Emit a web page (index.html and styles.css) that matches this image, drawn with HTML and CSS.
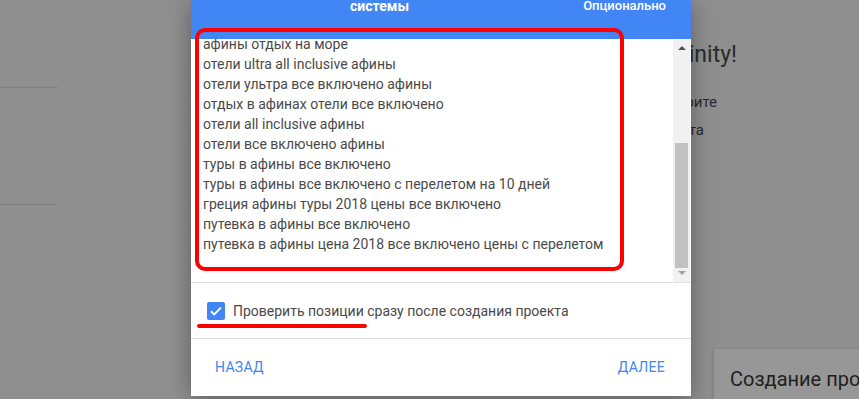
FILE: index.html
```html
<!DOCTYPE html>
<html lang="ru">
<head>
    <meta charset="UTF-8">
    <title>Создание проекта</title>
    <link rel="stylesheet" href="styles.css">
</head>
<body>
<div class="page">
    <div class="side">
        <div class="side-row"></div>
        <div class="side-row"></div>
    </div>
    <div class="intro">
        <p class="intro-title">Добро пожаловать в Serpinity!</p>
        <p class="intro-line l1">Чтобы начать работу, создайте проект и выберите</p>
        <p class="intro-line l2">регион и поисковую систему для вашего сайта</p>
    </div>
    <div class="card">Создание проекта</div>
</div>

<div class="dialog">
    <div class="dialog-head">
        <span class="head-title">системы</span>
        <span class="head-opt">Опционально</span>
    </div>
    <div class="keywords">
        <div class="keywords-list">
            <div>афины отдых на море</div>
            <div>отели ultra all inclusive афины</div>
            <div>отели ультра все включено афины</div>
            <div>отдых в афинах отели все включено</div>
            <div>отели all inclusive афины</div>
            <div>отели все включено афины</div>
            <div>туры в афины все включено</div>
            <div>туры в афины все включено с перелетом на 10 дней</div>
            <div>греция афины туры 2018 цены все включено</div>
            <div>путевка в афины все включено</div>
            <div>путевка в афины цена 2018 все включено цены с перелетом</div>
        </div>
        <div class="scrollbar">
            <span class="arrow up"></span>
            <span class="thumb"></span>
            <span class="arrow down"></span>
        </div>
        <div class="mark-box"></div>
    </div>
    <label class="check-row">
        <span class="checkbox">
            <svg width="18" height="18" viewBox="0 0 18 18"><path d="M4 9.2l3.2 3.2L14 5.6" fill="none" stroke="#fff" stroke-width="2"/></svg>
        </span>
        <span class="check-text">Проверить позиции сразу после создания проекта</span>
        <span class="mark-line"></span>
    </label>
    <div class="actions">
        <button class="btn">НАЗАД</button>
        <button class="btn">ДАЛЕЕ</button>
    </div>
</div>
</body>
</html>
```

FILE: styles.css
```css
*{
    margin: 0;
    padding: 0;
    box-sizing: border-box;
}
body{
    width: 859px;
    height: 399px;
    overflow: hidden;
    background-color: #8f8f8f;
    font-family: Roboto, "Liberation Sans", sans-serif;
    position: relative;
}
.page{
    display: flex;
    height: 399px;
}
.side{
    width: 58px;
    padding-top: 87px;
}
.side-row{
    height: 117px;
    border-top: 1px solid #818181;
}
.intro{
    flex: 1;
    padding-top: 40px;
    text-align: right;
    color: #2b2b2b;
    margin-right: 122px;
}
.intro-title{
    font-size: 23px;
    height: 48px;
    line-height: 30px;
}
.intro-line{
    font-size: 15px;
    line-height: 28px;
}
.l1{
    padding-right: 20px;
}
.l2{
    padding-right: 33px;
}
.card{
    position: absolute;
    left: 714px;
    top: 349px;
    width: 200px;
    height: 80px;
    background-color: #979797;
    border-radius: 2px;
    box-shadow: 0 1px 4px rgba(0,0,0,.2);
    padding: 18px 0 0 16px;
    font-size: 20px;
    color: #1f1f1f;
    white-space: nowrap;
}
.dialog{
    position: absolute;
    left: 191px;
    top: 0;
    width: 500px;
    height: 396px;
    background-color: #fff;
    box-shadow: 0 4px 22px rgba(0,0,0,.35);
    display: flex;
    flex-direction: column;
}
.dialog-head{
    height: 39px;
    background-color: #4285f4;
    color: #fff;
    display: flex;
    align-items: flex-start;
    line-height: 12px;
}
.head-title{
    margin-left: 159px;
    font-size: 14px;
    font-weight: bold;
}
.head-opt{
    margin-left: auto;
    margin-right: 25px;
    font-size: 13px;
    font-weight: 500;
}
.keywords{
    position: relative;
    height: 244px;
    display: flex;
    border-bottom: 1px solid #e0e0e0;
}
.keywords-list{
    flex: 1;
    overflow: hidden;
    padding-left: 12px;
    font-size: 14px;
    line-height: 20px;
    color: #4a4a4a;
}
.keywords-list div:first-child{
    margin-top: -5px;
}
.scrollbar{
    width: 17px;
    margin-right: 1px;
    background-color: #f1f1f1;
    display: flex;
    flex-direction: column;
    align-items: center;
}
.arrow{
    width: 0;
    height: 0;
    border-left: 4px solid transparent;
    border-right: 4px solid transparent;
}
.up{
    margin-top: 7px;
    border-bottom: 4px solid #505050;
}
.down{
    margin-top: 3px;
    border-top: 4px solid #a3a3a3;
}
.thumb{
    width: 13px;
    height: 125px;
    margin-top: 93px;
    background-color: #c1c1c1;
}
.mark-box{
    position: absolute;
    left: 4px;
    top: -11px;
    width: 429px;
    height: 243px;
    border: 4px solid #ff0000;
    border-radius: 10px;
}
.check-row{
    position: relative;
    height: 56px;
    display: flex;
    align-items: center;
    padding-left: 16px;
    border-bottom: 1px solid #e0e0e0;
}
.checkbox{
    width: 18px;
    height: 18px;
    border-radius: 2px;
    background-color: #4285f4;
    margin-right: 8px;
}
.checkbox svg{
    display: block;
}
.check-text{
    font-size: 14px;
    color: #4a4a4a;
}
.mark-line{
    position: absolute;
    left: 6px;
    top: 41px;
    width: 170px;
    height: 4px;
    border-radius: 2px;
    background-color: #ff0000;
}
.actions{
    flex: 1;
    display: flex;
    justify-content: space-between;
    align-items: center;
    padding: 0 26px 1px 24px;
}
.btn{
    border: none;
    background: none;
    font-family: Roboto, "Liberation Sans", sans-serif;
    font-size: 14px;
    color: #4285f4;
    letter-spacing: .3px;
}
```
